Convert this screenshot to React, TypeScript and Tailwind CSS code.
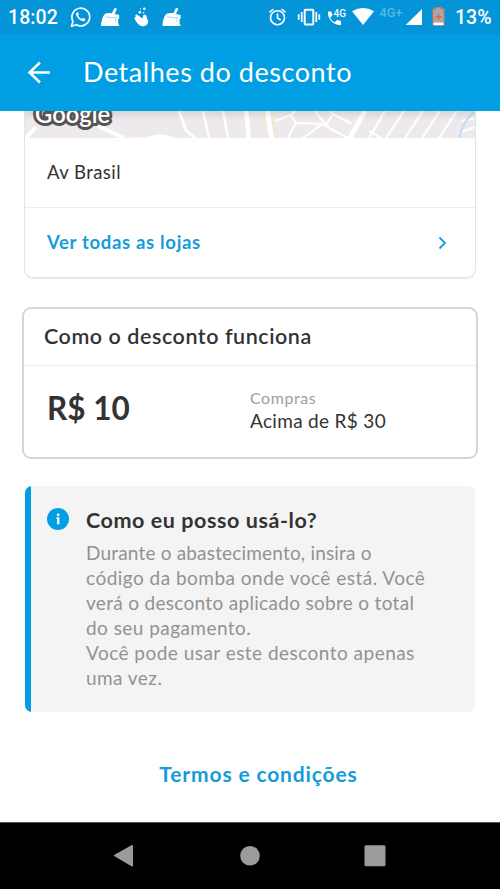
import React from "react";

function Broom({ x }: { x: number }) {
  return (
    <g transform={`translate(${x} 0)`}>
      <path d="M15 9.300 12.300 15" stroke="#fff" strokeWidth="2.700" strokeLinecap="round" />
      <path d="M4.800 13.800q3.200-1.200 6.500-.6l7.600 1.700v3.500l-1 .6v4.200l1.100 2.800H.7c.1-4.700 1.500-9.600 4.100-12.200Z" fill="#fff" />
      <path d="M5 16.800q7 1.200 11.500.8M15.300 18v4" stroke="#0494d8" strokeWidth=".6" opacity=".6" />
    </g>
  );
}

function StatusIcons() {
  return (
    <svg className="h-[34px] w-[126px]" viewBox="66 0 126 34" fill="none">
      <path d="M71.500 26.200l1.500-4.900A8.900 8.900 0 1 1 76.300 24.700Z" stroke="#fff" strokeWidth="1.700" strokeLinejoin="round" />
      <path d="M77.200 12.300c-1.500.7-1.400 2.400-.5 3.900 1.300 2.300 3 3.900 5.500 4.900 1.500.5 3.300-.5 3.100-2.200l-2.500-1.200-1.200 1.200c-1.700-.8-2.700-1.900-3.500-3.300l.8-1.100-.9-2.200Z" fill="#fff" />
      <Broom x={100.300} />
      <g fill="#fff">
        <circle cx="139.800" cy="12.300" r="1.400" />
        <circle cx="144.300" cy="8.800" r="1.300" />
        <circle cx="143.500" cy="12.800" r=".8" />
        <circle cx="140.500" cy="8.900" r=".7" />
        <path d="M135.300 15.500q1-1.600 2.200-.6l5 3.600.6-2.800q1.400-2.400 3-.2l2 5.500c.3 3.500-3 5.600-6 5.300-2.400-.3-6.800-5-7.500-7.600-.2-1.300.2-2 1.200-2Z" />
      </g>
      <Broom x={161.700} />
    </svg>
  );
}

function SystemIcons() {
  return (
    <svg className="h-[34px] w-[180px]" viewBox="266 0 180 34" fill="none">
      <g stroke="#fff" strokeWidth="1.600">
        <circle cx="277.500" cy="17.700" r="7" />
        <path d="M277.500 13.500v4.500l3.200 2M269.500 12.300l4-3.300M281.500 9l4 3.300" />
      </g>
      <g stroke="#fff" strokeWidth="1.700">
        <rect x="304.700" y="9.800" width="8.600" height="14.600" rx="1" strokeWidth="2" />
        <path d="M301.700 12v10M298.700 14.200v5.600M316.300 12v10M319.300 14.200v5.600" />
      </g>
      <path d="M328 11.500h3.400l1 4-2.200 2.300c1 2.100 2.400 3.500 4.500 4.500l2.300-2.200 4 1v4c-7.300.5-13.700-6.200-13-13.600Z" fill="#fff" />
      <text x="333.500" y="17" textLength="12.500" lengthAdjust="spacingAndGlyphs" className="fill-white font-['Roboto'] text-[11px] font-medium">4G</text>
      <path d="M352 11.200q11-6.400 22 0L363 25Z" fill="#fff" />
      <text x="379.500" y="17.200" textLength="23" className="fill-[#56b8e8] font-['Roboto'] text-[12.500px] font-medium">4G+</text>
      <path d="M422 9v16h-16.300Z" fill="#fff" />
      <path d="M436 7.500h5V9h3v16h-11V9h3Z" fill="#a5a9ac" stroke="#ed7048" strokeWidth="1.100" />
      <rect x="433.500" y="22.600" width="10" height="2.600" fill="#fff" />
      <path d="M438.500 13.800v6M435.500 16.800h6" stroke="#ed6538" strokeWidth="1.600" />
    </svg>
  );
}

function MapStrip() {
  return (
    <svg className="block h-[27px] w-full" viewBox="25 111 450 27" preserveAspectRatio="none">
      <defs>
        <linearGradient id="shade" x1="0" x2="0" y1="0" y2="1">
          <stop offset="0" stopColor="#000" stopOpacity=".09" />
          <stop offset="1" stopColor="#000" stopOpacity="0" />
        </linearGradient>
      </defs>
      <rect x="25" y="111" width="450" height="27" fill="#ede9ed" />
      <g stroke="#fff" strokeWidth="2.200" fill="none">
        <path d="M25 139 36 127M98 126 124 138" strokeWidth="4" />
        <path d="M179 111l7 19 9 8" strokeWidth="3" />
        <path d="M203 111l6 27M223 111l5 27" strokeWidth="2.500" />
        <path d="M246 111l3 27" strokeWidth="4.500" />
        <path d="M275 121l16-6 5 8 26 1 28 15M291 115l5-4M296 123l-8 15M315 111l11 14M326 125l7-11 19 10M322 124l-20 15M333 114l-3-3" />
        <path d="M365 111 350 138" strokeWidth="5" />
        <path d="M385 111l-16 27M404 111l-18 27M423 111l-18 27M440 111l-18 27M457 111l-18 27M369 131l12 7M462 121l13-3M458 133l17-6" />
      </g>
      <path d="M127 139q8-3 18-1 16-7 30 0Z" fill="#fff" />
      <path d="M263 111l4 27M272 111l4 27" stroke="#f1ecc5" strokeWidth="1.800" />
      <path d="M267.500 111l4 27" stroke="#fff" strokeWidth="5" />
      <path d="M474 112q-12 11-15 26" stroke="#c7dff0" strokeWidth="2.500" fill="none" />
      <rect x="25" y="111" width="450" height="9" fill="url(#shade)" />
      <text x="35" y="123.300" textLength="75" lengthAdjust="spacingAndGlyphs" className="fill-white stroke-[#555] stroke-[6px] font-['Lato'] text-[24px] font-semibold [paint-order:stroke] [stroke-linejoin:round]">Google</text>
    </svg>
  );
}

export default function App() {
  return (
    <div className="flex h-[889px] w-[500px] flex-col overflow-hidden bg-white font-['Lato',sans-serif] text-[#333]">
      <div className="flex h-[34px] shrink-0 items-center bg-[#0494d8] font-['Roboto'] text-[19.500px] font-medium text-white">
        <span className="w-[66px] pt-[2px] pl-[8px] tracking-[0.1px]">18:02</span>
        <StatusIcons />
        <span className="w-[74px]" />
        <SystemIcons />
        <span className="pt-[2px] pl-[9px]">13%</span>
      </div>
      <header className="flex h-[77px] shrink-0 items-center bg-[#009ee3] pl-[27px] text-white">
        <svg className="h-[24px] w-[24px]" viewBox="0 0 24 24" fill="none" stroke="#fff" strokeWidth="2.500">
          <path d="M23 11.500H2.500M13 1.500 2.500 11.500 13 21.500" />
        </svg>
        <h1 className="pb-[2px] pl-[32px] text-[27px] leading-none font-normal tracking-[0.550px] whitespace-nowrap">Detalhes do desconto</h1>
      </header>

      <main className="flex h-[711px] shrink-0 flex-col">
        <section className="mx-[24px] h-[167px] shrink-0 rounded-b-[9px] border border-t-0 border-[#e4e4e4] shadow-[0_1px_1px_#e8e8e8]">
          <MapStrip />
          <div className="flex h-[70px] items-center border-b border-[#ededed] pl-[22px] text-[18.500px]">
            <span className="tracking-[0.450px]">Av Brasil</span>
          </div>
          <div className="flex h-[69px] items-center justify-between pr-[28px] pl-[22px] text-[18.500px] font-bold text-[#159cd8]">
            <span className="tracking-[0.680px]">Ver todas as lojas</span>
            <svg className="h-[14px] w-[9px]" viewBox="0 0 9 14" fill="none" stroke="#159cd8" strokeWidth="1.800">
              <path d="M1.500 1.500 7 7l-5.500 5.500" />
            </svg>
          </div>
        </section>

        <section className="mx-[22px] mt-[29px] h-[152px] shrink-0 rounded-[9px] border-2 border-[#d5d5d5]">
          <h2 className="flex h-[57px] items-center border-b border-[#ededed] pb-px pl-[20px] text-[21.500px] font-semibold tracking-[0.550px]">Como o desconto funciona</h2>
          <div className="flex h-[90px] items-center pl-[23px]">
            <strong className="w-[203px] pb-[4px] text-[31.500px] leading-none font-bold">R$ 10</strong>
            <div className="flex flex-col pb-[2px]">
              <span className="text-[16px] leading-[22px] tracking-[0.550px] text-[#a0a0a0]">Compras</span>
              <span className="text-[19px] leading-[24px] tracking-[0.320px]">Acima de R$ 30</span>
            </div>
          </div>
        </section>

        <section className="mx-[25px] mt-[27px] flex h-[226px] shrink-0 overflow-hidden rounded-[7px] bg-[#f4f4f4]">
          <div className="w-[6px] bg-[#009ee3]" />
          <svg className="mt-[22px] ml-[16px] h-[22px] w-[22px]" viewBox="0 0 22 22">
            <circle cx="11" cy="11" r="11" fill="#009ee3" />
            <circle cx="11.200" cy="6.800" r="1.400" fill="#fff" />
            <path d="M9.400 9.300h3v7h-2.300v-5.400h-.7Z" fill="#fff" />
          </svg>
          <div className="pt-[21px] pl-[17px] whitespace-nowrap">
            <h2 className="text-[21.500px] leading-[26px] font-bold tracking-[0.570px]">Como eu posso usá-lo?</h2>
            <p className="mt-[7px] text-[19px] leading-[25px] text-[#929292]">
              <span className="tracking-[0.180px]">Durante o abastecimento, insira o</span><br />
              <span className="tracking-[0.480px]">código da bomba onde você está. Você</span><br />
              <span className="tracking-[0.310px]">verá o desconto aplicado sobre o total</span><br />
              <span className="tracking-[0.450px]">do seu pagamento.</span><br />
              <span className="tracking-[0.470px]">Você pode usar este desconto apenas</span><br />
              <span className="tracking-[0.450px]">uma vez.</span>
            </p>
          </div>
        </section>

        <a className="mt-[48px] self-center pl-[17px] text-[21px] leading-[28px] font-bold tracking-[0.850px] text-[#159cd8]">Termos e condições</a>
      </main>

      <nav className="flex h-[67px] shrink-0 items-center border-t border-[#555] bg-black">
        <svg className="h-[66px] w-full" viewBox="0 823 500 66" fill="#9b9b9b">
          <path d="M115 855.500 132 846v19.500Z" stroke="#9b9b9b" strokeWidth="2" strokeLinejoin="round" />
          <circle cx="250" cy="855.700" r="9.800" />
          <rect x="364.500" y="845.200" width="21" height="21" rx="1.500" />
        </svg>
      </nav>
    </div>
  );
}
